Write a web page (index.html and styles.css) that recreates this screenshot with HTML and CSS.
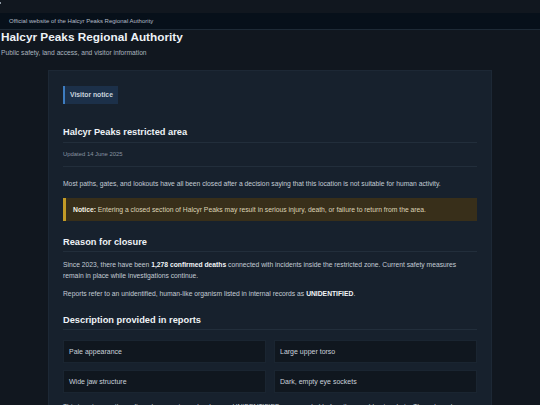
FILE: index.html
```html
<!DOCTYPE html>
<html lang="en">
<head>
<meta charset="utf-8">
<title>Halcyr Peaks Regional Authority</title>
<link rel="stylesheet" href="styles.css">
</head>
<body>
<div class="pre"><span class="mark"></span></div>
<div class="topbar">Official website of the Halcyr Peaks Regional Authority</div>
<header class="header">
  <h1 class="site-title">Halcyr Peaks Regional Authority</h1>
  <p class="site-sub">Public safety, land access, and visitor information</p>
</header>
<main class="card">
  <div class="badge">Visitor notice</div>
  <h2 class="sec-title first">Halcyr Peaks restricted area</h2>
  <div class="meta">Updated 14 June 2025</div>
  <p class="text lead">Most paths, gates, and lookouts have all been closed after a decision saying that this location is not suitable for human activity.</p>
  <div class="notice"><strong>Notice:</strong> Entering a closed section of Halcyr Peaks may result in serious injury, death, or failure to return from the area.</div>
  <h2 class="sec-title">Reason for closure</h2>
  <p class="text">Since 2023, there have been <strong>1,278 confirmed deaths</strong> connected with incidents inside the restricted zone. Current safety measures remain in place while investigations continue.</p>
  <p class="text">Reports refer to an unidentified, human-like organism listed in internal records as <strong>UNIDENTIFIED</strong>.</p>
  <h2 class="sec-title">Description provided in reports</h2>
  <div class="traits">
    <div class="trait">Pale appearance</div>
    <div class="trait">Large upper torso</div>
    <div class="trait">Wide jaw structure</div>
    <div class="trait">Dark, empty eye sockets</div>
  </div>
  <p class="text">This is not currently confirmed, as most people who saw UNIDENTIFIED were mauled before they could get a photo. The only real evidence comes from the few survivors who returned from the area.</p>
</main>
</body>
</html>
```

FILE: styles.css
```css
html, body {
  margin: 0;
  padding: 0;
}
body {
  background: #11171f;
  font-family: "Liberation Sans", Arial, sans-serif;
  color: #c3ccd5;
}
.pre {
  height: 10.5px;
}
.mark {
  display: block;
  width: 1px;
  height: 2px;
  margin-top: 2px;
  background: #8d98a3;
}
.topbar {
  background: #07101a;
  border-bottom: 1px solid #1e2a36;
  height: 16px;
  line-height: 16px;
  padding-left: 9px;
  font-size: 6px;
  color: #b3bdc7;
}
.header {
  padding: 0 1px;
}
.site-title {
  margin: 0;
  font-size: 11.8px;
  line-height: 14px;
  font-weight: bold;
  color: #eef2f6;
}
.site-sub {
  margin: 4px 0 0;
  font-size: 6.7px;
  line-height: 10px;
  color: #a9b4bf;
}
.card {
  display: block;
  width: 414px;
  margin: 12.5px auto 0;
  background: #17212d;
  border: 1px solid #1d2835;
  border-bottom: none;
  padding: 14.5px 14px 20px;
}
.badge {
  display: block;
  width: fit-content;
  background: #1c3049;
  border-left: 2px solid #3d7cc0;
  padding: 0 5px;
  height: 18px;
  line-height: 18px;
  font-size: 6.8px;
  font-weight: bold;
  color: #c9d3de;
}
.sec-title {
  margin: 14.4px 0 0;
  font-size: 9.27px;
  line-height: 12px;
  font-weight: bold;
  color: #eef2f6;
  padding-bottom: 3.5px;
  border-bottom: 1px solid #222e3b;
}
.sec-title.first {
  margin-top: 22.5px;
}
.meta {
  margin-top: 6px;
  padding-bottom: 7.6px;
  border-bottom: 1px solid #222e3b;
  font-size: 5.9px;
  line-height: 10px;
  color: #8893a0;
}
.text {
  margin: 7px 0 0;
  font-size: 6.76px;
  line-height: 11px;
  color: #c3ccd5;
}
.text strong {
  color: #f2f5f8;
}
.text.lead {
  margin-top: 10.9px;
}
.notice {
  margin-top: 9px;
  background: #382f1a;
  border-left: 3px solid #c29a26;
  padding: 6px 7px;
  font-size: 6.78px;
  line-height: 11px;
  color: #ddd3b5;
}
.notice strong {
  color: #f4efe0;
}
.notice + .sec-title {
  margin-top: 15px;
}
.traits {
  margin-top: 9.5px;
  display: grid;
  grid-template-columns: 1fr 1fr;
  gap: 7px 8px;
}
.trait {
  background: #10171f;
  border: 1px solid #1a2531;
  padding: 0 5px;
  height: 21px;
  line-height: 21px;
  font-size: 7px;
  color: #c9d1da;
}
.traits + .text {
  margin-top: 8px;
}
```
